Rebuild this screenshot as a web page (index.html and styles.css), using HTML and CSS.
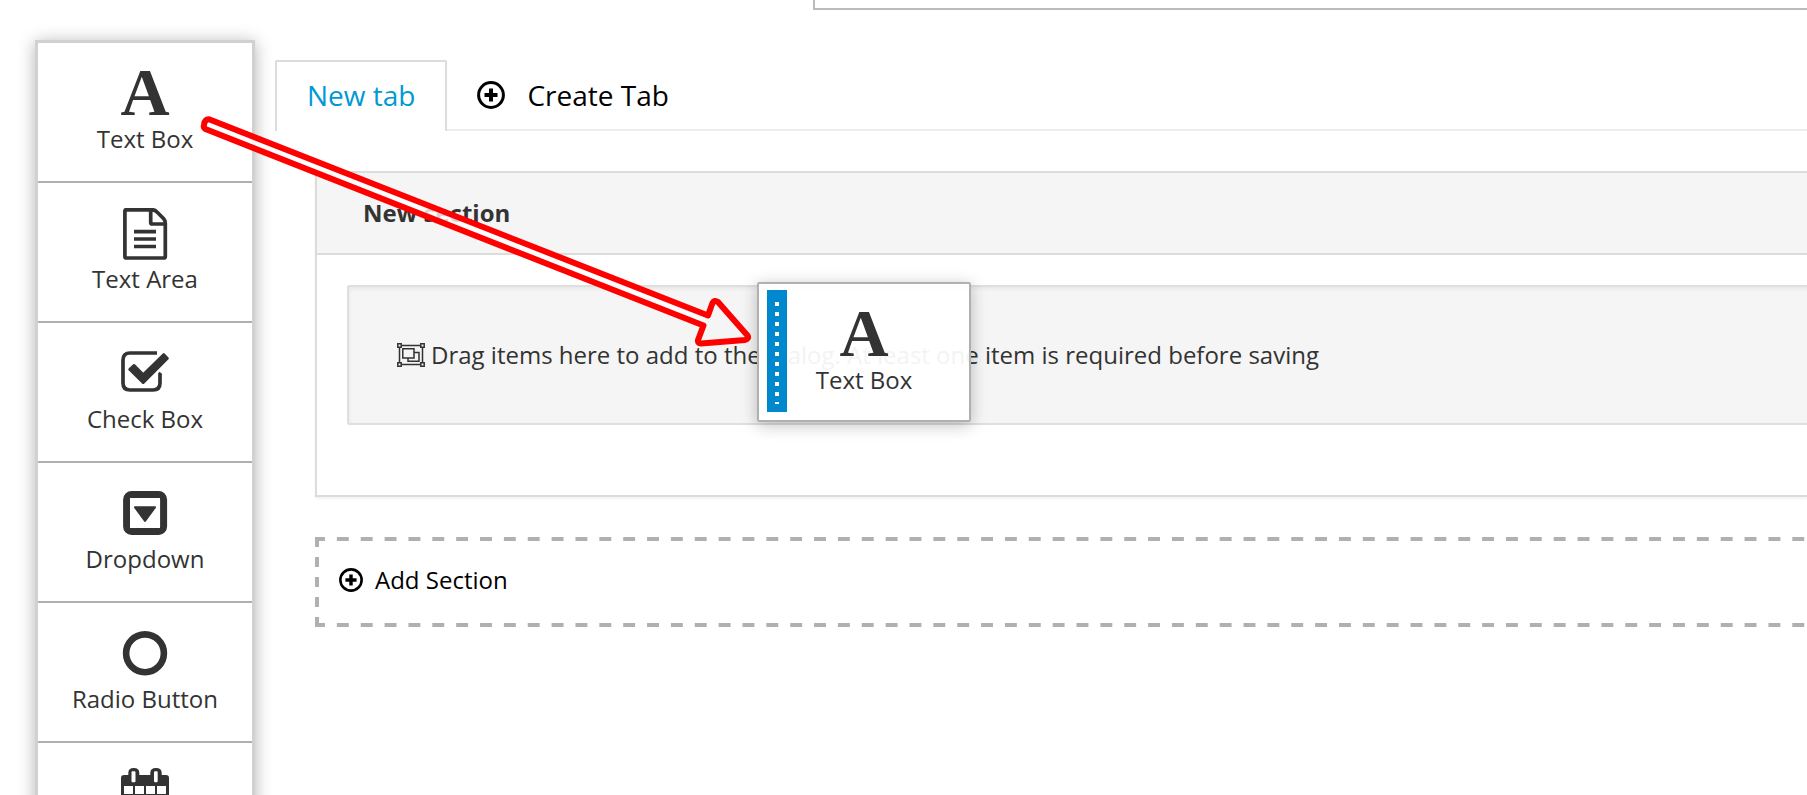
FILE: index.html
```html
<!DOCTYPE html>
<html lang="en">
<head>
<meta charset="utf-8">
<title>Dialog editor</title>
<link rel="stylesheet" href="styles.css">
</head>
<body>
<header class="details"><textarea class="description" aria-label="Description"></textarea></header>
<div class="workspace">
  <aside class="palette">
    <button class="tool" type="button"><span class="letter" aria-hidden="true">A</span><span class="label">Text Box</span></button>
    <button class="tool" type="button">
      <svg class="icon" viewBox="0 0 52 52" fill="none" stroke="currentColor" stroke-width="3.7" stroke-linejoin="round"><path d="M7 1.8H33.5Q36 1.8 38 4L44.500 10.500Q46.300 12.500 46.300 15V48.500Q46.300 50 44.800 50H7.400Q5.900 50 5.900 48.500V3.300Q5.900 1.800 7.400 1.800M31.700 2V14.500Q31.700 16 33.200 16H46"/><path stroke-linejoin="miter" d="M15 23.700H37M15 31H37M15 38.500H37"/></svg>
      <span class="label">Text Area</span></button>
    <button class="tool" type="button">
      <svg class="icon" viewBox="0 0 52 52"><path fill="none" stroke="currentColor" stroke-width="3.700" d="M38 5H11Q4 5 4 12V35Q4 42 11 42H34Q41 42 41 35V26L42 25"/><path fill="currentColor" stroke="currentColor" stroke-width="2.500" stroke-linejoin="round" d="M10.500 21.300L15 17.200L24.200 26.300L44.700 6.300L48.600 10.300L24.200 34.800Z"/></svg>
      <span class="label">Check Box</span></button>
    <button class="tool" type="button">
      <svg class="icon" viewBox="0 0 52 52"><rect x="7.600" y="6.600" width="37" height="37" rx="5" fill="none" stroke="currentColor" stroke-width="7"/><rect x="11" y="10" width="30" height="30" fill="#fff"/><path fill="currentColor" stroke="currentColor" stroke-width="2" stroke-linejoin="round" d="M16 19.300H36L26 33Z"/></svg>
      <span class="label">Dropdown</span></button>
    <button class="tool" type="button">
      <svg class="icon" viewBox="0 0 52 52"><circle cx="26" cy="25.300" r="18.900" fill="none" stroke="currentColor" stroke-width="6.600"/></svg>
      <span class="label">Radio Button</span></button>
    <button class="tool" type="button" aria-label="Calendar">
      <svg class="icon" viewBox="0 0 52 52"><path fill="currentColor" fill-rule="evenodd" d="M5 7H9.300V5Q9.300 0 14.800 0T20.300 5V7H31.300V5Q31.300 0 37 0T42.700 5V7H47Q50 7 50 10V49Q50 52 47 52H5Q2 52 2 49V10Q2 7 5 7ZM12.500 4.500V13Q12.500 14.300 13.500 14.300H15.500Q16.500 14.300 16.500 13V4.500Q16.500 3.300 15.500 3.300H13.500Q12.500 3.300 12.500 4.500ZM35 4.500V13Q35 14.300 36 14.300H37.700Q38.700 14.300 38.700 13V4.500Q38.700 3.300 37.700 3.300H36Q35 3.300 35 4.500ZM5 18V26H14V18ZM16 18V26H25V18ZM27 18V26H36V18ZM38 18V26H47V18ZM5 28V37H14V28ZM16 28V37H25V28ZM27 28V37H36V28ZM38 28V37H47V28ZM5 39V49H14V39ZM16 39V49H25V39ZM27 39V49H36V39ZM38 39V49H47V39Z"/></svg></button>
  </aside>
  <main class="editor">
    <nav class="tabs">
      <button class="tab active" type="button">New tab</button>
      <button class="tab create" type="button">
        <svg class="plus" viewBox="0 0 28 28" fill="none" stroke="currentColor"><circle cx="14" cy="14" r="12.400" stroke-width="3"/><path stroke-width="4" d="M7.500 14H20.500M14 7.500V20.500"/></svg>
        <span>Create Tab</span></button>
    </nav>
    <section class="section">
      <h2 class="section-title">New section</h2>
      <div class="section-body">
        <div class="dropzone">
          <svg class="group" viewBox="0 0 28 24" fill="none" stroke="currentColor" stroke-width="1.500"><path d="M4.500 2.500H23.500M4.500 21.500H23.500M2.500 4.500V19.500M25.500 4.500V19.500"/><path d="M.8.8H4.200V4.200H.8ZM23.800.8H27.200V4.200H23.800ZM.8 19.800H4.200V23.200H.8ZM23.800 19.800H27.200V23.200H23.800Z"/><path d="M5.800 5.800H17V15H5.800ZM17 9.500H22V18.200H11V15"/></svg>
          <span>Drag items here to add to the dialog. At least one item is required before saving</span>
        </div>
      </div>
    </section>
    <button class="add-section" type="button">
      <svg class="plus small" viewBox="0 0 28 28" fill="none" stroke="currentColor"><circle cx="14" cy="14" r="12.400" stroke-width="3"/><path stroke-width="4" d="M7.500 14H20.500M14 7.500V20.500"/></svg>
      <span>Add Section</span></button>
  </main>
</div>
<div class="dragged">
  <span class="handle"></span>
  <span class="letter" aria-hidden="true">A</span><span class="label">Text Box</span>
</div>
<svg class="arrow" width="760" height="360" viewBox="0 0 760 360" stroke-linejoin="round">
  <path fill="#fff" fill-opacity=".8" d="M208 119L707 315L703 326L204 127Z"/>
  <path fill="#f5f5f5" d="M715 301L748 338L698 343Z"/>
  <path fill="none" stroke="#f00" stroke-width="6" d="M209 119.300Q205 119 204 124.500Q203 128 206 129.300L703.500 325.500L698 340Q697.500 343.500 701 343.500L745 340Q749.500 338.500 747.500 335.500L718 302Q714.500 299.500 712.500 303L708 315.500Z"/>
</svg>
</body>
</html>
```
FILE: styles.css
```css
* { box-sizing: border-box; }
html { height: 100%; overflow: hidden; }
body {
  position: relative;
  height: 100%;
  margin: 0;
  overflow: hidden;
  background: #fff;
  color: #333;
  font: 24px/36px "Open Sans", "Noto Sans", sans-serif;
}
button {
  margin: 0;
  border: 0;
  background: none;
  color: inherit;
  font: inherit;
}
svg { display: block; flex: none; }

.details { display: flex; height: 10px; padding-left: 813px; }
.description {
  flex: 1;
  padding: 0;
  border: 2px solid #bbb;
  border-width: 0 0 2px 2px;
  resize: none;
  overflow: hidden;
}

.workspace { display: flex; align-items: flex-start; padding-left: 35px; }
.palette {
  flex: none;
  width: 220px;
  margin-top: 30px;
  border: 3px solid #d1d1d1;
  background: #fff;
  box-shadow: 0 2px 16px rgba(0, 0, 0, .3);
}
.tool {
  display: flex;
  flex-direction: column;
  align-items: center;
  width: 100%;
  padding: 25px 0 23px;
  border-top: 2px solid #b0b0b0;
}
.tool:first-child { border-top: 0; }
.icon { width: 52px; height: 52px; }
.letter {
  height: 52px;
  font: bold 68px/48px "Liberation Serif", serif;
}
.label { line-height: 38px; }

.editor { flex: 1; min-width: 0; margin: 50px 0 0 20px; }
.tabs { display: flex; height: 71px; border-bottom: 2px solid #ececec; }
.tab { height: 71px; padding: 14px 30px 17px; font-size: 28px; line-height: 38px; }
.active {
  border: 2px solid #dcdcdc;
  border-bottom: 0;
  border-radius: 2px 2px 0 0;
  background: #fff;
  color: #0099d3;
}
.create { display: flex; align-items: center; gap: 22px; padding-top: 16px; color: #000; }
.plus { width: 28px; height: 28px; }
.small { width: 24px; height: 24px; }

.section {
  margin: 40px 0 0 40px;
  border: 2px solid #dcdcdc;
  border-right: 0;
  box-shadow: 0 2px 2px rgba(0, 0, 0, .05);
}
.section-title {
  margin: 0;
  padding-left: 46px;
  border-bottom: 2px solid #dcdcdc;
  background: #f5f5f5;
  font-size: 24px;
  line-height: 80px;
}
.section-body { padding: 30px 0 70px 30px; }
.dropzone {
  display: flex;
  align-items: center;
  gap: 6px;
  height: 140px;
  margin-right: -8px;
  padding-left: 48px;
  border: 2px solid #dfdfdf;
  border-radius: 2px;
  background: #f5f5f5;
  box-shadow: inset 0 2px 4px rgba(0, 0, 0, .06);
  white-space: nowrap;
}
.group { width: 28px; height: 24px; }

/* Dashes are painted as tiles so their length and spacing can be set per side. */
.add-section {
  display: flex;
  align-items: center;
  gap: 12px;
  width: calc(100% - 28px);
  height: 90px;
  margin: 40px 0 0 40px;
  padding: 0 24px 4px;
  background:
    linear-gradient(90deg, #b0b0b0 10px, transparent 10px 22px, #b0b0b0 22px) top left / 24px 4px round no-repeat,
    linear-gradient(90deg, #b0b0b0 10px, transparent 10px 22px, #b0b0b0 22px) bottom left / 24px 4px round no-repeat,
    linear-gradient(#b0b0b0 10px, transparent 10px) top left / 4px 20px repeat-y;
  color: #000;
}

.dragged {
  position: absolute;
  top: 282px;
  left: 757px;
  display: flex;
  flex-direction: column;
  align-items: center;
  width: 214px;
  padding: 25px 0 21px;
  border: 2px solid #b0b0b0;
  border-radius: 2px;
  background: rgba(255, 255, 255, .94);
  box-shadow: 0 3px 16px rgba(0, 0, 0, .25);
}
.handle {
  position: absolute;
  top: 6px;
  bottom: 8px;
  left: 8px;
  width: 20px;
  padding: 12px 8px 8px;
  background: repeating-linear-gradient(#fff 0 4px, #0088ce 4px 10px) content-box, #0088ce;
}
.arrow { position: absolute; top: 0; left: 0; pointer-events: none; }
```
